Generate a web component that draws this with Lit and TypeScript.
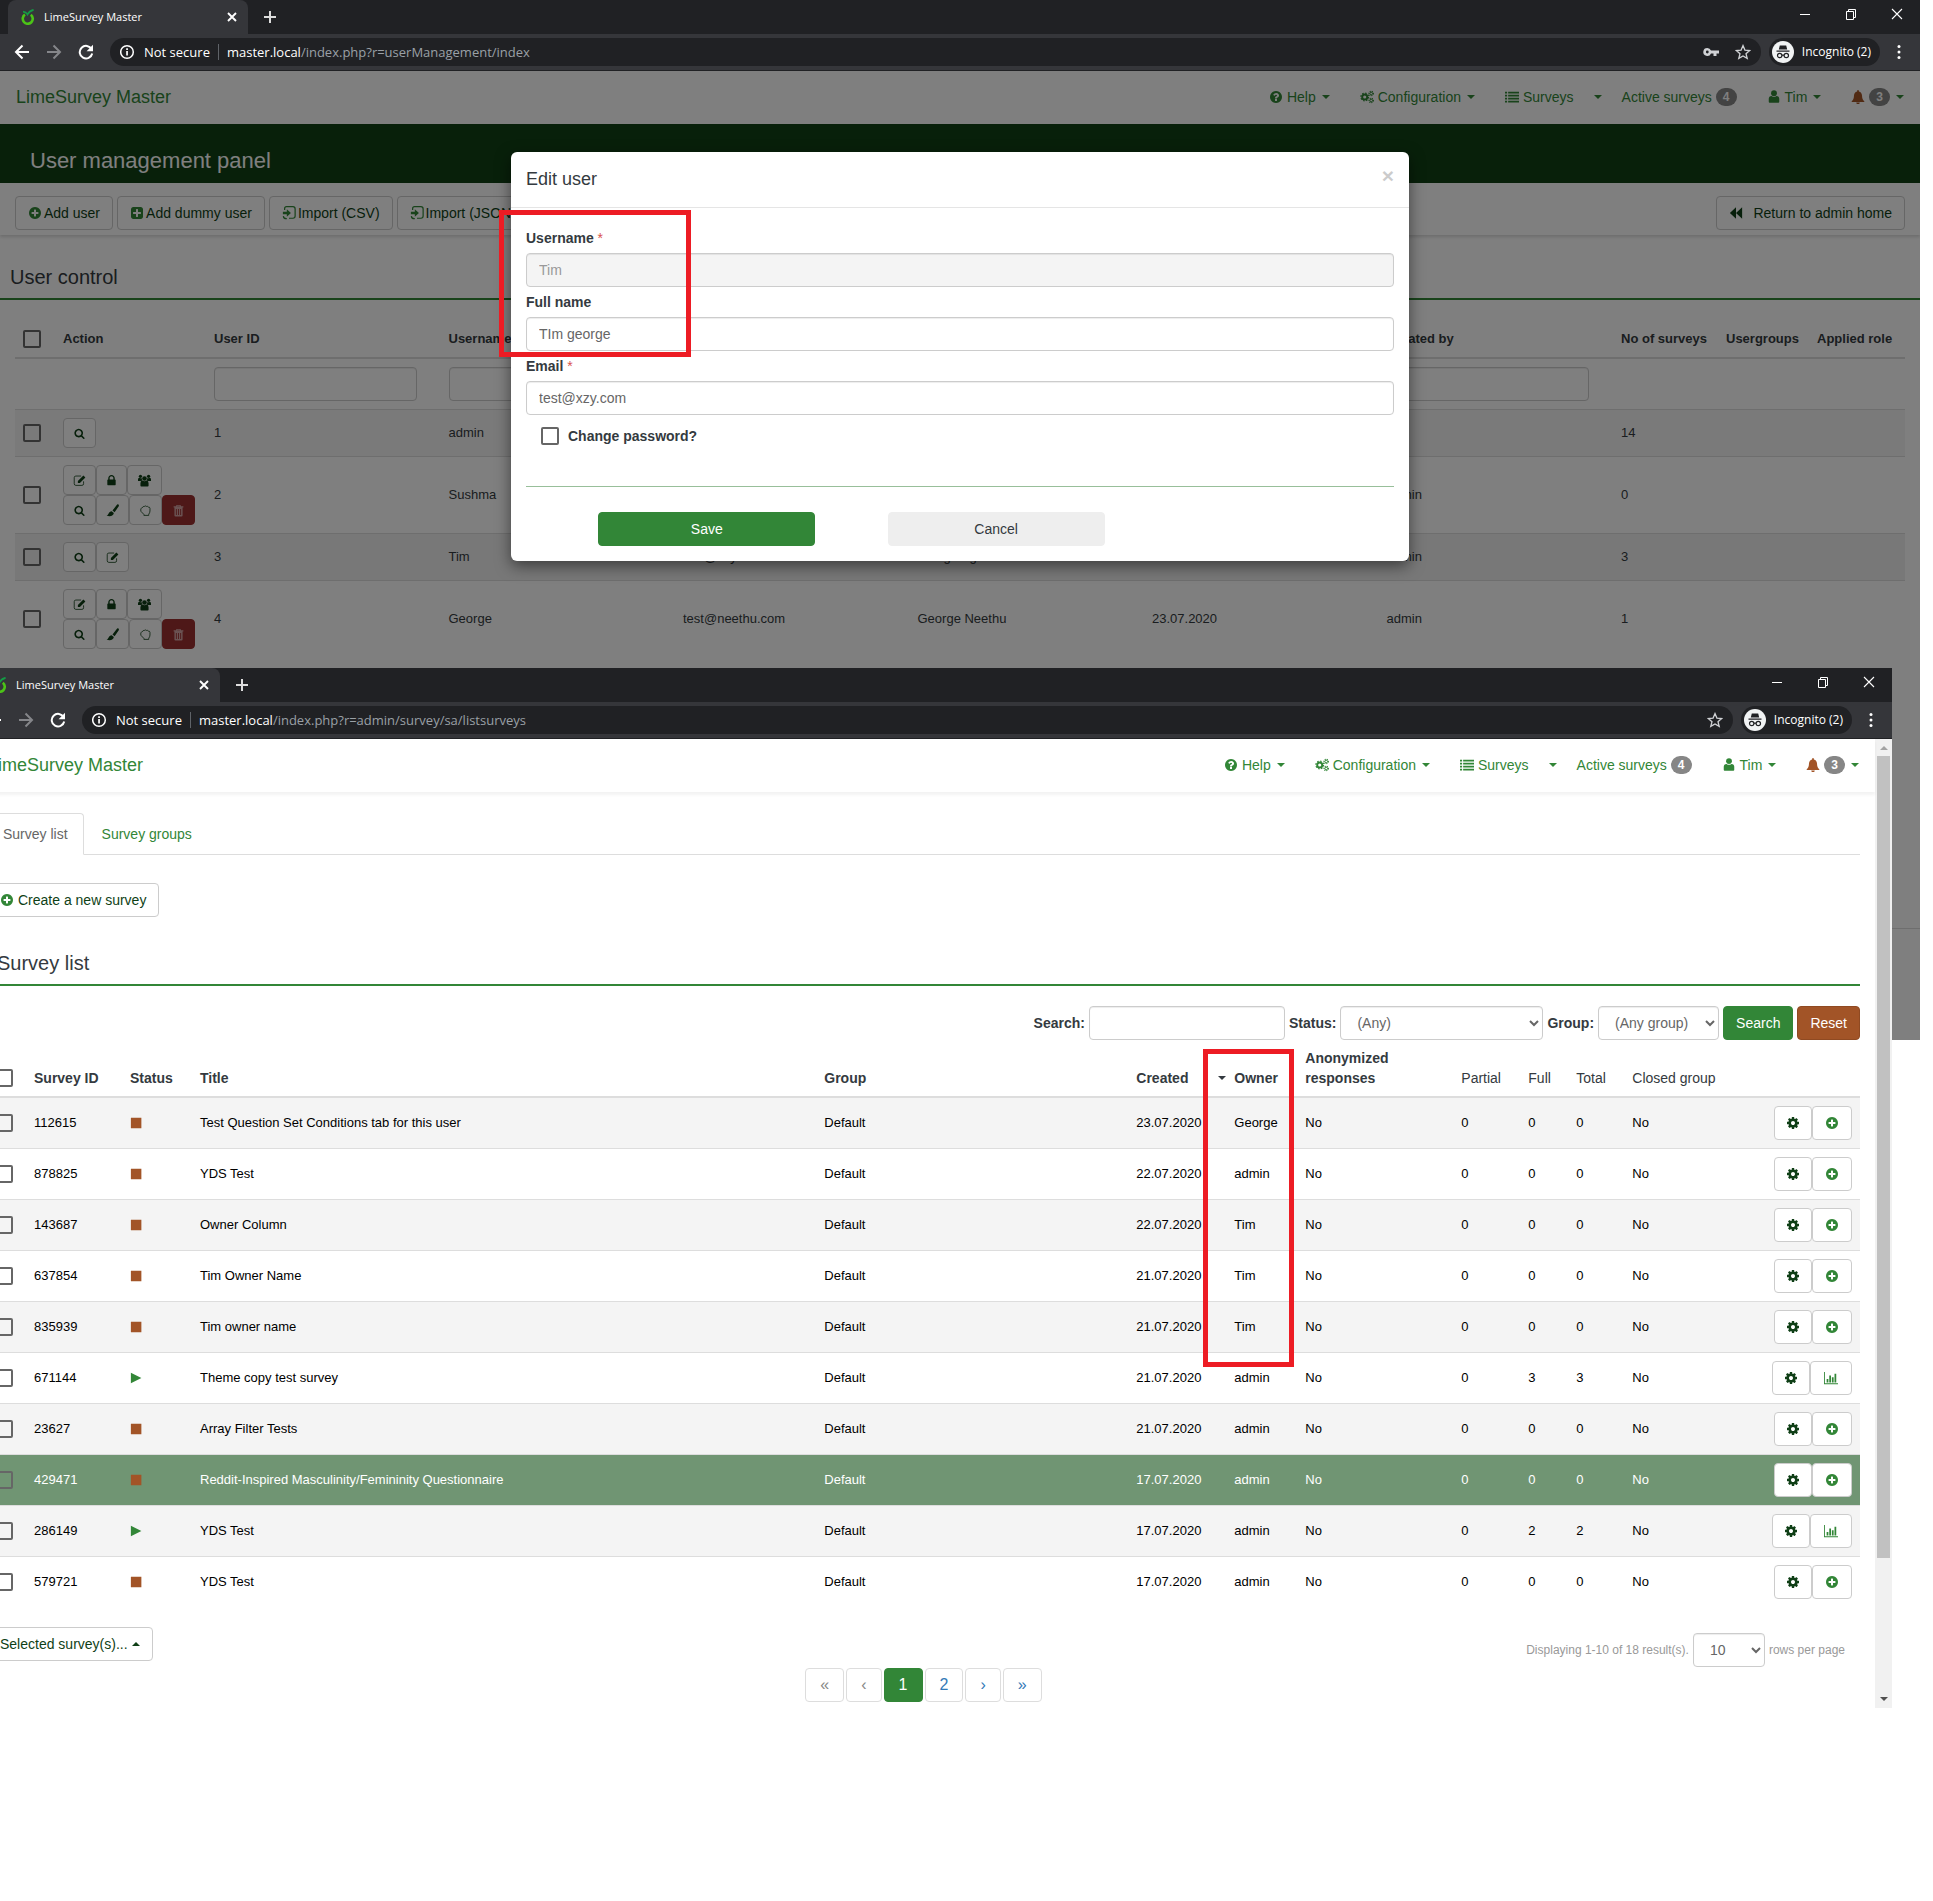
import { LitElement, html, svg, css, nothing } from "lit";
import { customElement, property } from "lit/decorators.js";

/* ---------- icons ---------- */

const fa = (d: string) => ({ box: "0 0 1792 1792", art: svg`<path fill="currentColor" d=${d} />` });
const px = (art: unknown) => ({ box: "0 0 16 16", art });

const gear = (cx: number, cy: number, r: number, w: number, teeth: number) => {
  const step = (2 * Math.PI * (r + w / 2 + 0.4)) / teeth;
  return svg`
    <circle cx=${cx} cy=${cy} r=${r} fill="none" stroke="currentColor" stroke-width=${w} />
    <circle cx=${cx} cy=${cy} r=${r + w / 2 + 0.4} fill="none" stroke="currentColor" stroke-width="1.4"
      stroke-dasharray="${step / 2} ${step / 2}" />`;
};

const ICONS: Record<string, { box: string; art: unknown }> = {
  plusCircle: fa(
    "M1344 960v-128q0-26-19-45t-45-19h-256v-256q0-26-19-45t-45-19h-128q-26 0-45 19t-19 45v256h-256q-26 0-45 19t-19 45v128q0 26 19 45t45 19h256v256q0 26 19 45t45 19h128q26 0 45-19t19-45v-256h256q26 0 45-19t19-45zm320-64q0 209-103 385.5t-279.5 279.5-385.5 103-385.5-103-279.5-279.5-103-385.5 103-385.5 279.5-279.5 385.5-103 385.5 103 279.5 279.5 103 385.5z"
  ),
  plusSquare: fa(
    "M1408 960v-128q0-26-19-45t-45-19h-320v-320q0-26-19-45t-45-19h-128q-26 0-45 19t-19 45v320h-320q-26 0-45 19t-19 45v128q0 26 19 45t45 19h320v320q0 26 19 45t45 19h128q26 0 45-19t19-45v-320h320q26 0 45-19t19-45zm256-544v960q0 119-84.5 203.5t-203.5 84.5h-960q-119 0-203.5-84.5t-84.5-203.5v-960q0-119 84.5-203.5t203.5-84.5h960q119 0 203.5 84.5t84.5 203.5z"
  ),
  help: fa(
    "M1024 1376v-192q0-14-9-23t-23-9h-192q-14 0-23 9t-9 23v192q0 14 9 23t23 9h192q14 0 23-9t9-23zm256-672q0-88-55.5-163t-138.5-116-170-41q-243 0-371 213-15 24 8 42l132 100q7 6 19 6 16 0 25-12 53-68 86-92 34-24 86-24 48 0 85.5 26t37.5 59q0 38-20 61t-68 45q-63 28-115.5 86.5t-52.5 125.5v36q0 14 9 23t23 9h192q14 0 23-9t9-23q0-19 21.5-49.5t54.5-49.5q32-18 49-28.5t46-35 44.5-48 28-60.5 12.5-81zm384 192q0 209-103 385.5t-279.5 279.5-385.5 103-385.5-103-279.5-279.5-103-385.5 103-385.5 279.5-279.5 385.5-103 385.5 103 279.5 279.5 103 385.5z"
  ),
  cog: fa(
    "M1152 896q0-106-75-181t-181-75-181 75-75 181 75 181 181 75 181-75 75-181zm512-109v222q0 12-8 23t-20 13l-185 28q-19 54-39 91 35 50 107 138 10 12 10 25t-9 23q-27 37-99 108t-94 71q-12 0-26-9l-138-108q-44 23-91 38-16 136-29 186-7 28-36 28h-222q-14 0-24.5-8.5t-11.5-21.5l-28-184q-49-16-90-37l-141 107q-10 9-25 9-14 0-25-11-126-114-165-168-7-10-7-23 0-12 8-23 15-21 51-66.5t54-70.5q-27-50-41-99l-183-27q-13-2-21-12.5t-8-23.5v-222q0-12 8-23t19-13l186-28q14-46 39-92-40-57-107-138-10-12-10-24 0-10 9-23 26-36 98.5-107.5t94.5-71.5q13 0 26 10l138 107q44-23 91-38 16-136 29-186 7-28 36-28h222q14 0 24.5 8.5t11.5 21.5l28 184q49 16 90 37l142-107q9-9 24-9 13 0 25 10 129 119 165 170 7 8 7 22 0 12-8 23-15 21-51 66.5t-54 70.5q26 50 41 98l183 28q13 2 21 12.5t8 23.5z"
  ),
  search: fa(
    "M1216 832q0-185-131.5-316.5t-316.5-131.5-316.5 131.5-131.5 316.5 131.5 316.5 316.5 131.5 316.5-131.5 131.5-316.5zm512 832q0 52-38 90t-90 38q-54 0-90-38l-343-342q-179 124-399 124-143 0-273.5-55.5t-225-150-150-225-55.5-273.5 55.5-273.5 150-225 225-150 273.5-55.5 273.5 55.5 225 150 150 225 55.5 273.5q0 220-124 399l343 343q37 37 37 90z"
  ),
  lock: fa(
    "M640 768h512v-192q0-106-75-181t-181-75-181 75-75 181v192zm832 96v576q0 40-28 68t-68 28h-960q-40 0-68-28t-28-68v-576q0-40 28-68t68-28h32v-192q0-184 132-316t316-132 316 132 132 316v192h32q40 0 68 28t28 68z"
  ),
  cogs: px(svg`${gear(5.4, 8, 2.9, 2.2, 8)}${gear(12.8, 4, 1.5, 1.1, 7)}${gear(12.8, 12, 1.5, 1.1, 7)}`),
  list: px(svg`<path fill="currentColor" d="M0 2h2.4v2H0zM3.6 2H16v2H3.6zM0 5.4h2.4v2H0zM3.6 5.4H16v2H3.6zM0 8.8h2.4v2H0zM3.6 8.8H16v2H3.6zM0 12.2h2.4v2H0zM3.6 12.2H16v2H3.6z"/>`),
  user: px(svg`<circle cx="8" cy="3.6" r="3.300" fill="currentColor"/><path fill="currentColor" d="M2 13.500V10Q2 7 5.200 6.800Q8 8.800 10.800 6.800Q14 7 14 10V13.500Q14 14.500 13 14.500H3Q2 14.500 2 13.500z"/>`),
  bell: px(svg`<path fill="currentColor" d="M8 0a1 1 0 0 1 1 1v.8c2.300.4 3.500 2.300 3.600 4.700.1 3.200.8 4.900 2.600 6.300v.8H.8v-.8c1.800-1.400 2.500-3.100 2.600-6.300C3.500 4.100 4.700 2.200 7 1.800V1a1 1 0 0 1 1-1zM6 14.200h4a2 2 0 0 1-4 0z"/>`),
  import: px(svg`<path fill="none" stroke="currentColor" stroke-width="1.400" d="M3 4.500V3Q3 .8 5.200 .8H12.500Q15 .8 15 3.300V11.500Q15 14 12.500 14H8"/><path fill="currentColor" d="M1 6.500h4.500V3.800l4.700 4.200-4.700 4.200V9.500H1z"/><path fill="none" stroke="currentColor" stroke-width="1.400" d="M1.500 11.500Q2 14.800 5.500 14.500"/>`),
  backward: px(svg`<path fill="currentColor" d="M8 1.500v13L1 8zM15 1.500v13L8 8z"/>`),
  edit: px(svg`<path fill="none" stroke="currentColor" stroke-width="1" d="M10 2.500H3.500Q1.500 2.500 1.500 4.500V12Q1.500 14 3.500 14H11Q13 14 13 12V9"/><path fill="currentColor" d="M6 11.200V8.600L12.800 1.800l2.400 2.400L8.500 11.200z"/>`),
  users: px(svg`<g fill="currentColor"><circle cx="8" cy="5.600" r="2.800"/><circle cx="3" cy="2.900" r="2"/><circle cx="13" cy="2.900" r="2"/><path d="M3 14.500v-3q0-3.200 2.400-3.400 2.600 1.700 5.200 0Q13 8.300 13 11.500v3q0 1-1 1H4q-1 0-1-1zM0 8.500V6.700Q0 4.900 1.500 4.700q1.500.900 3 .200.100 2 1 3-1.500 0-2.300.600zM16 8.500V6.700q0-1.800-1.500-2-1.500.900-3 .200-.1 2-1 3 1.500 0 2.300.600z"/></g>`),
  brush: px(svg`<path fill="currentColor" d="M15.300.600c.8.600.8 1.500.2 2.500L10.600 10 8 8.100l5-6.700c.7-1 1.500-1.300 2.300-.8zM7 9l2.600 2c.1 3.200-4.600 5.600-8.900 3.300C3.600 13.600 3 9.400 7 9z"/>`),
  hand: px(svg`<path fill="none" stroke="currentColor" stroke-width="1" d="M4.500 4.200Q5 2.700 6.500 3 8 1.800 9.300 3q1.600-.5 2.200.8 1.900-.2 2 1.600v3.200Q13.400 11 12 12.500V14H6v-1.200L2.500 9.200Q1.600 7.200 2.600 5.600 3.200 4.400 4.500 4.200z"/>`),
  trash: px(svg`<path fill="currentColor" fill-rule="evenodd" d="M5.500 1.200h5l.6 1.600H14v1.400h-1V14q0 1.400-1.300 1.400H4.300Q3 15.400 3 14V4.200H2V2.800h2.900zm.8 1.600h3.400l-.2-.6h-3zM4.800 6v7.500h1.100V6zm2.700 0v7.500h1.100V6zm2.600 0v7.500h1.100V6z"/>`),
  chart: px(svg`<path fill="currentColor" d="M0 1h1v13h15v1H0zM3 9h2v4H3zM6 5h2v8H6zM9 7h2v6H9zM12 3h2v10h-2z"/>`),
  stop: px(svg`<path fill="currentColor" d="M1 2h12v12H1z"/>`),
  play: px(svg`<path fill="currentColor" d="M1 2l12 6-12 6z"/>`),
  caretDown: { box: "0 0 8 4", art: svg`<path fill="currentColor" d="M0 0h8L4 4z"/>` },
  caretUp: { box: "0 0 8 4", art: svg`<path fill="currentColor" d="M0 4h8L4 0z"/>` },
  lime: px(svg`<path fill="none" stroke="#4cc417" stroke-width="2.600" d="M5 5.600a5 5 0 1 0 5.800.2"/><path fill="none" stroke="#149a45" stroke-width="1.800" d="M3 2.600Q6 2.800 7.500 5.400 9.500 1.600 13.600.8"/>`),
  close: px(svg`<path fill="none" stroke="currentColor" stroke-width="1.900" d="M4 4l8 8M12 4l-8 8"/>`),
  plus: px(svg`<path fill="none" stroke="currentColor" stroke-width="2" d="M8 2v12M2 8h12"/>`),
  back: px(svg`<path fill="none" stroke="currentColor" stroke-width="2" d="M15 8H2M8.500 1.500L2 8l6.500 6.500"/>`),
  forward: px(svg`<path fill="none" stroke="currentColor" stroke-width="2" d="M1 8h13M7.500 1.500L14 8l-6.500 6.500"/>`),
  reload: px(svg`<path fill="none" stroke="currentColor" stroke-width="2" d="M13.600 5.200A6.300 6.300 0 1 0 14.200 9.500"/><path fill="currentColor" d="M15 .8v6.400H8.600z"/>`),
  info: px(svg`<circle cx="7" cy="8" r="6.300" fill="none" stroke="currentColor" stroke-width="1.500"/><path fill="currentColor" d="M6.200 7h1.700v4.500H6.200zM6.200 4.300h1.700V6H6.200z"/>`),
  key: px(svg`<path fill="currentColor" fill-rule="evenodd" d="M4.300 4a4 4 0 1 0 3.700 5.500h2.500V12h3V9.500H16v-3H8A4 4 0 0 0 4.300 4zm0 2.600a1.400 1.400 0 1 1 0 2.800 1.400 1.400 0 0 1 0-2.800z"/>`),
  star: px(svg`<path fill="none" stroke="currentColor" stroke-width="1.300" d="M8 1.600l1.900 4.500 4.800.4-3.700 3.200 1.200 4.700L8 11.900l-4.200 2.500L5 9.700 1.300 6.500l4.800-.4z"/>`),
  minimise: px(svg`<path fill="none" stroke="currentColor" d="M3 8.500h10"/>`),
  restore: px(svg`<path fill="none" stroke="currentColor" d="M3.500 5.500h7v8h-7zM5.500 5.500v-2h7v8h-2"/>`),
  quit: px(svg`<path fill="none" stroke="currentColor" stroke-width="1.100" d="M3 3l10 10M13 3L3 13"/>`),
  dots: px(svg`<circle cx="8" cy="2.500" r="1.500" fill="currentColor"/><circle cx="8" cy="8" r="1.500" fill="currentColor"/><circle cx="8" cy="13.500" r="1.500" fill="currentColor"/>`),
  incognito: {
    box: "0 0 22 22",
    art: svg`<circle cx="11" cy="11" r="11" fill="#f1f3f4"/><path fill="#202124" d="M7.800 4.500h6.400l1 4H6.800zM4.500 9.500h13v1.300h-13z"/><g fill="none" stroke="#202124" stroke-width="1.200"><circle cx="7.700" cy="14.500" r="2.200"/><circle cx="14.300" cy="14.500" r="2.200"/><path d="M9.900 14.200h2.200"/></g>`,
  },
};

const icon = (name: string, cls = "") =>
  html`<svg class="icon ${cls}" viewBox=${ICONS[name].box} aria-hidden="true">${ICONS[name].art}</svg>`;

/* ---------- shared look ---------- */

const base = css`
  *,
  *::before,
  *::after {
    box-sizing: border-box;
  }
  :host {
    display: block;
    font-family: "Liberation Sans", Arial, sans-serif;
    font-size: 14px;
    line-height: 20px;
    color: #343a40;
  }
  button,
  input,
  select {
    font: inherit;
    margin: 0;
  }
  a {
    color: #328637;
    text-decoration: none;
  }
  .icon {
    width: 14px;
    height: 14px;
    flex: none;
    display: block;
  }
  .caret {
    width: 8px;
    height: 4px;
  }
  .green {
    color: #328637;
  }
  .btn {
    display: inline-flex;
    align-items: center;
    justify-content: center;
    gap: 4px;
    height: 34px;
    padding: 0 12px;
    border: 1px solid #ccc;
    border-radius: 4px;
    background: #fff;
    color: #0f3f16;
    white-space: nowrap;
  }
  .btn.primary {
    background: #328637;
    border-color: #328637;
    color: #fff;
  }
  .field {
    height: 34px;
    padding: 6px 12px;
    border: 1px solid #ccc;
    border-radius: 4px;
    background: #fff;
    color: #666;
    box-shadow: inset 0 1px 1px rgba(0, 0, 0, 0.075);
  }
  .check {
    appearance: none;
    display: block;
    flex: none;
    width: 18px;
    height: 18px;
    border: 2px solid #666;
    border-radius: 2px;
    background: transparent;
  }
  .section {
    margin: 0;
    padding: 0 10px 10px;
    border-bottom: 2px solid #328637;
    font-size: 20px;
    line-height: 22px;
    font-weight: 400;
  }
  table {
    width: 100%;
    table-layout: fixed;
    border-collapse: separate;
    border-spacing: 0;
  }
  th,
  td {
    padding: 8px;
    text-align: left;
    white-space: nowrap;
  }
  th {
    border-bottom: 2px solid #ddd;
    vertical-align: bottom;
  }
  td {
    border-top: 1px solid #ddd;
    vertical-align: middle;
    font-size: 13px;
  }
  tbody tr:first-child td {
    border-top: 0;
  }
  .marker {
    position: absolute;
    border: 5px solid #ed1c24;
    pointer-events: none;
  }
`;

/* ---------- browser window ---------- */

@customElement("browser-window")
export class BrowserWindow extends LitElement {
  @property() host = "";
  @property() path = "";
  @property({ type: Boolean }) key = false;
  @property({ type: Boolean }) scrollbar = false;

  static styles = [
    base,
    css`
      :host {
        height: 1040px;
        display: flex;
        flex-direction: column;
        background: #fff;
        overflow: hidden;
      }
      button {
        display: block;
        padding: 0;
        border: 0;
        background: none;
        color: inherit;
      }
      .chrome {
        font-family: "Open Sans", "Noto Sans", sans-serif;
        color: #fff;
      }
      .chrome .icon {
        width: 16px;
        height: 16px;
      }
      .strip {
        display: flex;
        align-items: center;
        height: 34px;
        padding: 0 15px 0 8px;
        background: #202124;
      }
      .tab {
        display: flex;
        align-items: center;
        gap: 8px;
        width: 240px;
        height: 34px;
        padding: 0 8px 0 12px;
        border-radius: 8px 8px 0 0;
        background: #35363a;
        font-size: 11px;
      }
      .tab span {
        flex: 1;
      }
      .add {
        margin-left: 14px;
        color: #ddd;
      }
      .controls {
        display: flex;
        gap: 30px;
        margin-left: auto;
        padding-bottom: 6px;
      }
      .bar {
        display: flex;
        align-items: center;
        gap: 16px;
        height: 37px;
        padding: 0 13px 0 14px;
        border-bottom: 1px solid #202124;
        background: #35363a;
      }
      .dim {
        color: #85868a;
      }
      .address {
        flex: 1;
        display: flex;
        align-items: center;
        gap: 8px;
        height: 28px;
        margin-right: -8px;
        padding: 0 10px;
        border-radius: 14px;
        background: #202124;
        font-size: 13px;
      }
      .address .rule {
        width: 1px;
        height: 16px;
        background: #5f6368;
      }
      .address .path {
        color: #9aa0a6;
      }
      .address .tools {
        display: flex;
        gap: 16px;
        margin-left: auto;
        color: #d0d2d5;
      }
      .profile {
        display: flex;
        align-items: center;
        gap: 8px;
        height: 28px;
        margin-right: -5px;
        padding: 0 9px 0 3px;
        border-radius: 14px;
        background: #202124;
        font-size: 12px;
      }
      .profile .icon {
        width: 22px;
        height: 22px;
      }
      .body {
        flex: 1;
        display: flex;
        min-height: 0;
      }
      .page {
        flex: 1;
        min-width: 0;
        position: relative;
      }
      .scroll {
        display: flex;
        flex-direction: column;
        align-items: center;
        width: 17px;
        padding: 7px 0;
        background: #f1f1f1;
        color: #a3a3a3;
      }
      .thumb {
        width: 13px;
        height: 84%;
        margin: 6px 0 auto;
        background: #c1c1c1;
      }
      .down {
        color: #505050;
      }
    `,
  ];

  render() {
    return html`
      <div class="chrome">
        <div class="strip">
          <div class="tab">
            ${icon("lime")}<span>LimeSurvey Master</span>
            <button aria-label="Close tab">${icon("close")}</button>
          </div>
          <button class="add" aria-label="New tab">${icon("plus")}</button>
          <div class="controls">
            <button aria-label="Minimise">${icon("minimise")}</button>
            <button aria-label="Restore">${icon("restore")}</button>
            <button aria-label="Close">${icon("quit")}</button>
          </div>
        </div>
        <div class="bar">
          <button aria-label="Back">${icon("back")}</button>
          <button class="dim" aria-label="Forward">${icon("forward")}</button>
          <button aria-label="Reload">${icon("reload")}</button>
          <div class="address">
            ${icon("info")}<span>Not secure</span><i class="rule"></i>
            <span>${this.host}<span class="path">${this.path}</span></span>
            <div class="tools">${this.key ? icon("key") : nothing}${icon("star")}</div>
          </div>
          <button class="profile">${icon("incognito")}Incognito (2)</button>
          <button aria-label="Menu">${icon("dots")}</button>
        </div>
      </div>
      <div class="body">
        <div class="page"><slot></slot></div>
        ${this.scrollbar
          ? html`<div class="scroll">
              ${icon("caretUp", "caret")}<i class="thumb"></i>${icon("caretDown", "caret down")}
            </div>`
          : nothing}
      </div>
    `;
  }
}

/* ---------- application header ---------- */

@customElement("admin-navbar")
export class AdminNavbar extends LitElement {
  static styles = [
    base,
    css`
      header {
        display: flex;
        align-items: center;
        justify-content: space-between;
        height: 53px;
        padding: 0 16px 2px;
        background: #fff;
        box-shadow: 0 3px 3px rgba(0, 0, 0, 0.05);
      }
      .brand {
        font-size: 18px;
      }
      nav {
        display: flex;
        gap: 30px;
      }
      a {
        display: flex;
        align-items: center;
        gap: 4px;
      }
      .split {
        display: flex;
        gap: 20px;
        margin-right: -10px;
      }
      .caret {
        margin-left: 2px;
      }
      .split .caret {
        margin: 0;
      }
      .badge {
        padding: 0 7px;
        border-radius: 10px;
        background: #868686;
        color: #fff;
        font-size: 12px;
        line-height: 18px;
        font-weight: 700;
      }
      .bell {
        color: #a25427;
      }
    `,
  ];

  render() {
    const caret = icon("caretDown", "caret");
    return html`
      <header>
        <a class="brand" href="#">LimeSurvey Master</a>
        <nav>
          <a href="#">${icon("help")}Help ${caret}</a>
          <a href="#">${icon("cogs")}Configuration ${caret}</a>
          <div class="split">
            <a href="#">${icon("list")}Surveys</a>
            <a href="#" aria-label="More surveys">${caret}</a>
          </div>
          <a href="#">Active surveys <span class="badge">4</span></a>
          <a href="#">${icon("user")}Tim ${caret}</a>
          <a href="#">${icon("bell", "bell")}<span class="badge">3</span>${caret}</a>
        </nav>
      </header>
    `;
  }
}

/* ---------- user management ---------- */

interface User {
  id: number;
  name: string;
  email: string;
  full: string;
  created: string;
  by: string;
  surveys: number;
  actions: string[][];
  hover?: boolean;
}

const ALL_ACTIONS = [
  ["edit", "lock", "users"],
  ["search", "brush", "hand", "trash"],
];

const USERS: User[] = [
  { id: 1, name: "admin", email: "", full: "", created: "", by: "", surveys: 14, actions: [["search"]] },
  { id: 2, name: "Sushma", email: "", full: "", created: "", by: "admin", surveys: 0, actions: ALL_ACTIONS },
  { id: 3, name: "Tim", email: "test@xzy.com", full: "TIm george", created: "", by: "admin", surveys: 3, actions: [["search", "edit"]], hover: true },
  { id: 4, name: "George", email: "test@neethu.com", full: "George Neethu", created: "23.07.2020", by: "admin", surveys: 1, actions: ALL_ACTIONS },
];

@customElement("user-management")
export class UserManagement extends LitElement {
  static styles = [
    base,
    css`
      :host {
        height: 969px;
        display: flex;
        flex-direction: column;
        overflow: hidden;
      }
      .band {
        position: relative;
        height: 59px;
        padding: 25px 30px 0;
        background: #104115;
        color: #fff;
        font-size: 22px;
        line-height: 24px;
        font-weight: 400;
        margin: 0;
      }
      .toolbar {
        display: flex;
        gap: 4px;
        padding: 13px 15px 5px;
        box-shadow: 0 2px 3px rgba(0, 0, 0, 0.15);
      }
      .toolbar .btn {
        gap: 2px;
      }
      .toolbar .return {
        gap: 10px;
        margin-left: auto;
      }
      .section {
        margin-top: 31px;
      }
      .list {
        padding: 21px 15px 0;
      }
      th {
        font-size: 13px;
      }
      .c-check {
        width: 40px;
      }
      .c-action {
        width: 151px;
      }
      .c-surveys {
        width: 105px;
      }
      .c-groups {
        width: 91px;
      }
      .c-role {
        width: 96px;
      }
      th.pick {
        padding: 9px 8px;
      }
      .odd td {
        background: #f5f5f5;
      }
      .hover td {
        background: #f0f0f0;
      }
      .filter {
        display: block;
        width: calc(100% - 16px);
      }
      .group {
        display: flex;
      }
      .act {
        height: 30px;
        padding: 0 9px;
      }
      .act .icon {
        width: 13px;
        height: 13px;
      }
      .act.search .icon {
        padding: 1px;
      }
      .act.trash {
        background: #9c3030;
        border-color: #9c3030;
        color: #d5a5a5;
      }
      .act.lock {
        padding: 0 8px;
      }
      .act.users {
        padding: 0 10px;
      }
      footer {
        height: 112px;
        margin-top: auto;
        border-top: 1px solid #ddd;
      }
      .overlay {
        position: absolute;
        inset: 0;
        display: flex;
        align-items: flex-start;
        justify-content: center;
        padding-top: 81px;
        background: rgba(0, 0, 0, 0.5);
      }
      .modal {
        position: relative;
        width: 898px;
        border-radius: 6px;
        background: #fff;
        box-shadow: 0 5px 15px rgba(0, 0, 0, 0.5);
      }
      .modal-head {
        display: flex;
        justify-content: space-between;
        padding: 16px 15px;
        border-bottom: 1px solid #e5e5e5;
      }
      .modal-head h2 {
        margin: 0;
        font-size: 18px;
        line-height: 23px;
        font-weight: 400;
      }
      .close {
        height: 16px;
        padding: 0;
        border: 0;
        background: none;
        color: #000;
        opacity: 0.2;
        font-size: 21px;
        line-height: 16px;
        font-weight: 700;
      }
      form {
        padding: 20px 15px 15px;
      }
      .caption {
        display: block;
        padding: 0 0 5px;
        font-weight: 700;
      }
      .caption + .field {
        display: block;
        width: 100%;
        margin-bottom: 5px;
      }
      .star {
        color: #d9534f;
        font-weight: 400;
      }
      .field:disabled {
        background: #f4f4f4;
        color: #999;
      }
      .toggle {
        display: flex;
        align-items: center;
        gap: 9px;
        padding: 6px 15px 40px;
        font-weight: 700;
      }
      .actions {
        display: grid;
        grid-template-columns: repeat(12, 1fr);
        padding-top: 25px;
        border-top: 1px solid #98bf9a;
      }
      .save {
        grid-column: 2 / 5;
      }
      .cancel {
        grid-column: 6 / 9;
        border-color: #eee;
        background: #eee;
        color: #343a40;
      }
      .marker {
        top: 58px;
        left: -12px;
        width: 192px;
        height: 147px;
      }
    `,
  ];

  private row(u: User, i: number) {
    return html`
      <tr class="${u.hover ? "hover" : i % 2 ? "" : "odd"}">
        <td><input class="check" type="checkbox" aria-label="Select ${u.name}" /></td>
        <td>
          ${u.actions.map(
            (line) => html`<div class="group">
              ${line.map((a) => html`<button class="btn act ${a}" aria-label=${a}>${icon(a)}</button>`)}
            </div>`
          )}
        </td>
        <td>${u.id}</td>
        <td>${u.name}</td>
        <td>${u.email}</td>
        <td>${u.full}</td>
        <td>${u.created}</td>
        <td>${u.by}</td>
        <td>${u.surveys}</td>
        <td></td>
        <td></td>
      </tr>
    `;
  }

  render() {
    const filtered = ["User ID", "Username", "Email", "Full name", "Created on", "Created by"];
    return html`
      <admin-navbar></admin-navbar>
      <h1 class="band">User management panel</h1>
      <div class="toolbar">
        <button class="btn">${icon("plusCircle", "green")}Add user</button>
        <button class="btn">${icon("plusSquare", "green")}Add dummy user</button>
        <button class="btn">${icon("import", "green")}Import (CSV)</button>
        <button class="btn">${icon("import", "green")}Import (JSON)</button>
        <button class="btn return">${icon("backward")}Return to admin home</button>
      </div>
      <h2 class="section">User control</h2>
      <div class="list">
        <table>
          <colgroup>
            <col class="c-check" /><col class="c-action" />
            ${filtered.map(() => html`<col />`)}
            <col class="c-surveys" /><col class="c-groups" /><col class="c-role" />
          </colgroup>
          <thead>
            <tr>
              <th class="pick"><input class="check" type="checkbox" aria-label="Select all users" /></th>
              <th>Action</th>
              ${filtered.map((f) => html`<th>${f}</th>`)}
              <th>No of surveys</th>
              <th>Usergroups</th>
              <th>Applied role</th>
            </tr>
          </thead>
          <tbody>
            <tr>
              <td></td>
              <td></td>
              ${filtered.map((f) => html`<td><input class="field filter" aria-label="Filter by ${f}" /></td>`)}
              <td></td>
              <td></td>
              <td></td>
            </tr>
            ${USERS.map((u, i) => this.row(u, i))}
          </tbody>
        </table>
      </div>
      <footer></footer>
      <div class="overlay">
        <div class="modal" role="dialog" aria-labelledby="dialog-title">
          <div class="modal-head">
            <h2 id="dialog-title">Edit user</h2>
            <button class="close" aria-label="Close">×</button>
          </div>
          <form>
            <label class="caption" for="username">Username <span class="star">*</span></label>
            <input class="field" id="username" .value=${"Tim"} disabled />
            <label class="caption" for="fullname">Full name</label>
            <input class="field" id="fullname" .value=${"TIm george"} />
            <label class="caption" for="email">Email <span class="star">*</span></label>
            <input class="field" id="email" type="email" .value=${"test@xzy.com"} />
            <label class="toggle"><input class="check" type="checkbox" />Change password?</label>
            <div class="actions">
              <button class="btn primary save" type="button">Save</button>
              <button class="btn cancel" type="button">Cancel</button>
            </div>
          </form>
          <div class="marker"></div>
        </div>
      </div>
    `;
  }
}

/* ---------- survey list ---------- */

type Survey = [id: number, title: string, created: string, owner: string, full: number, running: boolean];

const SURVEYS: Survey[] = [
  [112615, "Test Question Set Conditions tab for this user", "23.07.2020", "George", 0, false],
  [878825, "YDS Test", "22.07.2020", "admin", 0, false],
  [143687, "Owner Column", "22.07.2020", "Tim", 0, false],
  [637854, "Tim Owner Name", "21.07.2020", "Tim", 0, false],
  [835939, "Tim owner name", "21.07.2020", "Tim", 0, false],
  [671144, "Theme copy test survey", "21.07.2020", "admin", 3, true],
  [23627, "Array Filter Tests", "21.07.2020", "admin", 0, false],
  [429471, "Reddit-Inspired Masculinity/Femininity Questionnaire", "17.07.2020", "admin", 0, false],
  [286149, "YDS Test", "17.07.2020", "admin", 2, true],
  [579721, "YDS Test", "17.07.2020", "admin", 0, false],
];

@customElement("survey-list")
export class SurveyList extends LitElement {
  @property({ type: Number }) highlighted = 429471;

  static styles = [
    base,
    css`
      main {
        padding: 21px 15px 0;
      }
      .tabs {
        display: flex;
        gap: 2px;
        border-bottom: 1px solid #ddd;
      }
      .tabs a {
        height: 42px;
        margin-bottom: -1px;
        padding: 10px 15px;
        border: 1px solid transparent;
        border-radius: 4px 4px 0 0;
      }
      .tabs .on {
        border-color: #ddd #ddd #fff;
        background: #fff;
        color: #666;
      }
      .create {
        margin: 28px 0 35px;
      }
      .filters {
        display: flex;
        align-items: center;
        justify-content: flex-end;
        gap: 4px;
        padding-top: 20px;
      }
      .filters label {
        font-weight: 700;
      }
      .w-search {
        width: 196px;
      }
      .w-status {
        width: 203px;
      }
      .w-group {
        width: 121px;
      }
      .reset {
        border-color: #8f4a22;
        background: #a25427;
        color: #fff;
      }
      .wrap {
        position: relative;
      }
      .marker {
        top: 9px;
        right: 566px;
        width: 91px;
        height: 318px;
      }
      th.plain {
        font-weight: 400;
      }
      .c-check {
        width: 39px;
      }
      .c-id {
        width: 96px;
      }
      .c-status {
        width: 70px;
      }
      .c-title {
        width: 33.33%;
      }
      .c-name {
        width: 16.66%;
      }
      .c-created {
        width: 98px;
      }
      .c-owner {
        width: 71px;
      }
      .c-anon {
        width: 156px;
      }
      .c-partial {
        width: 67px;
      }
      .c-full {
        width: 48px;
      }
      .c-total {
        width: 56px;
      }
      th.pick {
        padding: 9px 8px;
      }
      th.sorted {
        padding-right: 0;
      }
      .sort {
        display: flex;
        align-items: center;
        justify-content: space-between;
      }
      td {
        color: #000;
      }
      tbody tr:nth-child(odd) td {
        background: #f4f4f4;
      }
      tbody tr.hover td {
        background: #709573;
        color: #fff;
      }
      .stop {
        color: #a25427;
      }
      .play {
        color: #328637;
      }
      .acts {
        display: flex;
        justify-content: flex-end;
      }
      .acts .settings {
        padding: 0 11px;
      }
      .acts .stats {
        padding: 0 13px;
      }
      .below {
        display: flex;
        align-items: flex-start;
        justify-content: space-between;
        padding-top: 20px;
      }
      .summary {
        display: flex;
        align-items: center;
        gap: 4px;
        padding: 6px 15px 0 0;
        color: #999;
        font-size: 12px;
      }
      .w-size {
        width: 72px;
        font-size: 14px;
      }
      .pages {
        display: flex;
        justify-content: center;
        gap: 2px;
        padding-top: 1px;
      }
      .pages a {
        height: 34px;
        padding: 6px 14px;
        border: 1px solid #ddd;
        border-radius: 4px;
        color: #337ab7;
        font-size: 16px;
      }
      .pages .off {
        color: #888;
      }
      .pages .on {
        border-color: #328637;
        background: #328637;
        color: #fff;
      }
    `,
  ];

  private row([id, title, created, owner, full, running]: Survey) {
    return html`
      <tr class="${id === this.highlighted ? "hover" : ""}">
        <td><input class="check" type="checkbox" aria-label="Select survey ${id}" /></td>
        <td>${id}</td>
        <td>${running ? icon("play", "play") : icon("stop", "stop")}</td>
        <td>${title}</td>
        <td>Default</td>
        <td>${created}</td>
        <td>${owner}</td>
        <td>No</td>
        <td>0</td>
        <td>${full}</td>
        <td>${full}</td>
        <td>No</td>
        <td>
          <div class="acts">
            <button class="btn settings" aria-label="Settings">${icon("cog")}</button>
            <button class="btn ${running ? "stats" : ""}" aria-label=${running ? "Statistics" : "Add question"}>
              ${icon(running ? "chart" : "plusCircle", "green")}
            </button>
          </div>
        </td>
      </tr>
    `;
  }

  render() {
    return html`
      <admin-navbar></admin-navbar>
      <main>
        <nav class="tabs">
          <a class="on" href="#">Survey list</a>
          <a href="#">Survey groups</a>
        </nav>
        <button class="btn create">${icon("plusCircle", "green")}Create a new survey</button>
        <h2 class="section">Survey list</h2>
        <div class="filters">
          <label for="q">Search:</label>
          <input class="field w-search" id="q" />
          <label for="status">Status:</label>
          <select class="field w-status" id="status"><option>(Any)</option></select>
          <label for="group">Group:</label>
          <select class="field w-group" id="group"><option>(Any group)</option></select>
          <button class="btn primary">Search</button>
          <button class="btn reset">Reset</button>
        </div>
        <div class="wrap">
          <table>
            <colgroup>
              <col class="c-check" /><col class="c-id" /><col class="c-status" /><col class="c-title" />
              <col class="c-name" /><col class="c-created" /><col class="c-owner" /><col class="c-anon" />
              <col class="c-partial" /><col class="c-full" /><col class="c-total" /><col /><col />
            </colgroup>
            <thead>
              <tr>
                <th class="pick"><input class="check" type="checkbox" aria-label="Select all surveys" /></th>
                <th>Survey ID</th>
                <th>Status</th>
                <th>Title</th>
                <th>Group</th>
                <th class="sorted"><div class="sort">Created ${icon("caretDown", "caret")}</div></th>
                <th>Owner</th>
                <th>Anonymized<br />responses</th>
                <th class="plain">Partial</th>
                <th class="plain">Full</th>
                <th class="plain">Total</th>
                <th class="plain">Closed group</th>
                <th></th>
              </tr>
            </thead>
            <tbody>
              ${SURVEYS.map((s) => this.row(s))}
            </tbody>
          </table>
          <div class="marker"></div>
        </div>
        <div class="below">
          <button class="btn">Selected survey(s)... ${icon("caretUp", "caret")}</button>
          <div class="summary">
            Displaying 1-10 of 18 result(s).
            <select class="field w-size" id="size"><option>10</option></select>
            <label for="size">rows per page</label>
          </div>
        </div>
        <nav class="pages">
          <a class="off" href="#">«</a>
          <a class="off" href="#">‹</a>
          <a class="on" href="#">1</a>
          <a href="#">2</a>
          <a href="#">›</a>
          <a href="#">»</a>
        </nav>
      </main>
    `;
  }
}

/* ---------- desktop with two windows ---------- */

@customElement("app-root")
export class AppRoot extends LitElement {
  static styles = css`
    :host {
      display: block;
      position: relative;
      min-height: 100vh;
      background: #fff;
      overflow: hidden;
    }
    .rear {
      margin-right: 13px;
    }
    .front {
      position: absolute;
      top: 668px;
      left: -28px;
      right: 41px;
    }
  `;

  render() {
    return html`
      <browser-window class="rear" host="master.local" path="/index.php?r=userManagement/index" key>
        <user-management></user-management>
      </browser-window>
      <browser-window class="front" host="master.local" path="/index.php?r=admin/survey/sa/listsurveys" scrollbar>
        <survey-list></survey-list>
      </browser-window>
    `;
  }
}
